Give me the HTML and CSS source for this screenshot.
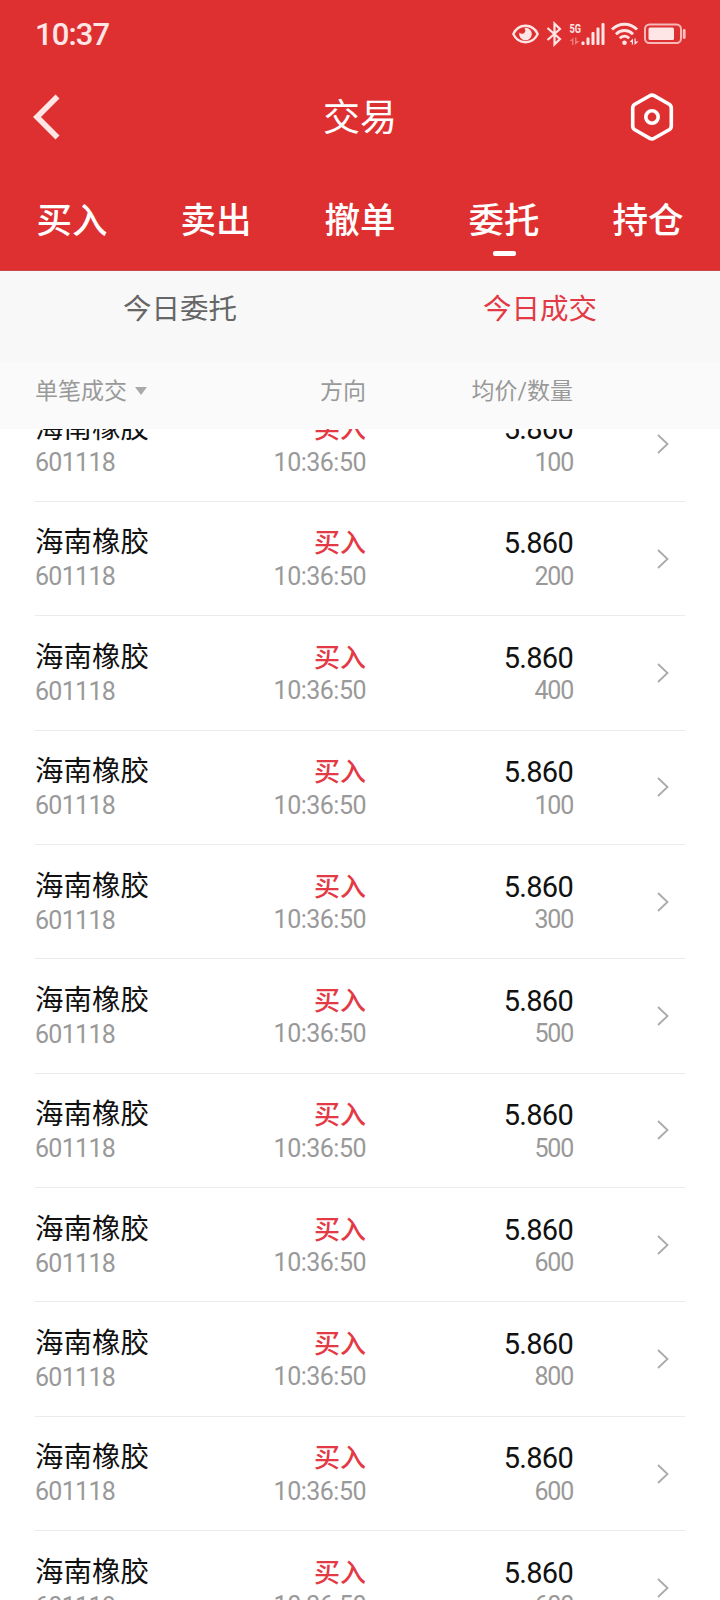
FILE: index.html
```
<!DOCTYPE html>
<html lang="zh-CN">
<head>
    <meta charset="UTF-8">
    <meta name="viewport" content="width=device-width, initial-scale=1.0">
    <title>交易</title>
    <link rel="stylesheet" href="styles.css">
</head>

<body>
    <div class="app">
        <header class="header">
            <div class="status-bar">
                <span class="clock">10:37</span>
                <div class="status-icons">
                    <svg class="icon-eye" width="27" height="20" viewBox="0 0 27 20" fill="none">
                        <path d="M1.3 10C6.5-1 20.5-1 25.7 10C20.5 21 6.5 21 1.3 10Z" stroke="currentColor" stroke-width="2.3"/>
                        <path d="M13.500 3.700A6.300 6.300 0 1 1 7.400 8.400Q9 10.500 11.500 9.500Q14.500 8 12.500 3.800Z" fill="currentColor"/>
                    </svg>
                    <svg class="icon-bluetooth" width="16" height="24" viewBox="0 0 16 24" fill="none" stroke="currentColor" stroke-width="2.200">
                        <path d="M1.500 6L14 17L8.500 22.400V1.600L14 7L1.500 18"/>
                    </svg>
                    <svg class="icon-signal" width="36" height="24" viewBox="0 0 36 24">
                        <text class="signal-text" x="0.500" y="10.500" textLength="11.500" lengthAdjust="spacingAndGlyphs">5G</text>
                        <path d="M0.500 19L4.500 15.500V23H3V19ZM6 15.500H7.500V19H10.500L6 23Z" fill="currentColor" opacity="0.4"/>
                        <g fill="currentColor">
                            <rect x="12.500" y="19.500" width="3" height="3.500" rx="1"/>
                            <rect x="17.500" y="15.500" width="3" height="7.500" rx="1"/>
                            <rect x="22.500" y="10" width="3" height="13" rx="1"/>
                            <rect x="27.500" y="5.500" width="3" height="17.500" rx="1"/>
                            <rect x="32.500" y="1" width="3" height="22" rx="1"/>
                        </g>
                    </svg>
                    <svg class="icon-wifi" width="28" height="24" viewBox="0 0 28 24" fill="none" stroke="currentColor" stroke-width="2.900">
                        <path d="M1 7.500C8 0.500 19 0.500 26 7.500"/>
                        <path d="M5 12.200C10 7.300 17 7.300 22 12.200"/>
                        <path d="M8.800 16.200C11.500 13.400 15.500 13.400 18.200 16.200"/>
                        <circle cx="13.500" cy="20.800" r="2.300" fill="currentColor" stroke="none"/>
                        <path d="M18.500 20L22 16.500V22.500H20.800V20ZM23.500 16.500H24.700V19.500H27.500L23.500 23Z" fill="currentColor" stroke="none"/>
                    </svg>
                    <svg class="icon-battery" width="42" height="22" viewBox="0 0 42 22" fill="none">
                        <rect x="1" y="1.500" width="36" height="18.500" rx="4.500" stroke="currentColor" stroke-width="2" opacity="0.75"/>
                        <rect x="4.500" y="4.500" width="25.500" height="12.500" rx="1.500" fill="currentColor"/>
                        <rect x="38.800" y="6" width="2.800" height="10" rx="1.400" fill="currentColor" opacity="0.8"/>
                    </svg>
                </div>
            </div>

            <div class="title-bar">
                <button class="back-btn" aria-label="返回">
                    <svg width="28" height="46" viewBox="0 0 28 46" fill="none" stroke="currentColor" stroke-width="5.600">
                        <path d="M24.500 2.500L4 23L24.500 43.500"/>
                    </svg>
                </button>
                <h1>交易</h1>
                <button class="settings-btn" aria-label="设置">
                    <svg width="44" height="48" viewBox="0 0 44 48" fill="none" stroke="currentColor" stroke-width="3.600" stroke-linejoin="round">
                        <path d="M19.800 2.700Q22 1.500 24.200 2.700L39.200 11.200Q41.300 12.500 41.300 15V33Q41.300 35.500 39.200 36.800L24.200 45.300Q22 46.500 19.800 45.300L4.800 36.800Q2.700 35.500 2.700 33V15Q2.700 12.500 4.800 11.200Z"/>
                        <circle cx="22" cy="24" r="6.200"/>
                    </svg>
                </button>
            </div>

            <nav class="main-tabs">
                <a class="tab">买入</a>
                <a class="tab">卖出</a>
                <a class="tab">撤单</a>
                <a class="tab active">委托</a>
                <a class="tab">持仓</a>
            </nav>
        </header>

        <div class="sub-tabs">
            <a class="sub-tab">今日委托</a>
            <a class="sub-tab active">今日成交</a>
        </div>

        <div class="table-head">
            <span class="filter">单笔成交<i class="caret"></i></span>
            <span class="right">方向</span>
            <span class="right">均价/数量</span>
        </div>

        <main class="list">
            <div class="rows">
                <div class="row">
                    <div class="stock"><p class="name">海南橡胶</p><p class="code">601118</p></div>
                    <div class="side"><p class="buy">买入</p><p class="time">10:36:50</p></div>
                    <div class="deal"><p class="price">5.860</p><p class="qty">100</p></div>
                    <svg class="arrow" viewBox="0 0 12 20"><path d="M1 1L10.500 10L1 19"/></svg>
                </div>
                <div class="row">
                    <div class="stock"><p class="name">海南橡胶</p><p class="code">601118</p></div>
                    <div class="side"><p class="buy">买入</p><p class="time">10:36:50</p></div>
                    <div class="deal"><p class="price">5.860</p><p class="qty">200</p></div>
                    <svg class="arrow" viewBox="0 0 12 20"><path d="M1 1L10.500 10L1 19"/></svg>
                </div>
                <div class="row">
                    <div class="stock"><p class="name">海南橡胶</p><p class="code">601118</p></div>
                    <div class="side"><p class="buy">买入</p><p class="time">10:36:50</p></div>
                    <div class="deal"><p class="price">5.860</p><p class="qty">400</p></div>
                    <svg class="arrow" viewBox="0 0 12 20"><path d="M1 1L10.500 10L1 19"/></svg>
                </div>
                <div class="row">
                    <div class="stock"><p class="name">海南橡胶</p><p class="code">601118</p></div>
                    <div class="side"><p class="buy">买入</p><p class="time">10:36:50</p></div>
                    <div class="deal"><p class="price">5.860</p><p class="qty">100</p></div>
                    <svg class="arrow" viewBox="0 0 12 20"><path d="M1 1L10.500 10L1 19"/></svg>
                </div>
                <div class="row">
                    <div class="stock"><p class="name">海南橡胶</p><p class="code">601118</p></div>
                    <div class="side"><p class="buy">买入</p><p class="time">10:36:50</p></div>
                    <div class="deal"><p class="price">5.860</p><p class="qty">300</p></div>
                    <svg class="arrow" viewBox="0 0 12 20"><path d="M1 1L10.500 10L1 19"/></svg>
                </div>
                <div class="row">
                    <div class="stock"><p class="name">海南橡胶</p><p class="code">601118</p></div>
                    <div class="side"><p class="buy">买入</p><p class="time">10:36:50</p></div>
                    <div class="deal"><p class="price">5.860</p><p class="qty">500</p></div>
                    <svg class="arrow" viewBox="0 0 12 20"><path d="M1 1L10.500 10L1 19"/></svg>
                </div>
                <div class="row">
                    <div class="stock"><p class="name">海南橡胶</p><p class="code">601118</p></div>
                    <div class="side"><p class="buy">买入</p><p class="time">10:36:50</p></div>
                    <div class="deal"><p class="price">5.860</p><p class="qty">500</p></div>
                    <svg class="arrow" viewBox="0 0 12 20"><path d="M1 1L10.500 10L1 19"/></svg>
                </div>
                <div class="row">
                    <div class="stock"><p class="name">海南橡胶</p><p class="code">601118</p></div>
                    <div class="side"><p class="buy">买入</p><p class="time">10:36:50</p></div>
                    <div class="deal"><p class="price">5.860</p><p class="qty">600</p></div>
                    <svg class="arrow" viewBox="0 0 12 20"><path d="M1 1L10.500 10L1 19"/></svg>
                </div>
                <div class="row">
                    <div class="stock"><p class="name">海南橡胶</p><p class="code">601118</p></div>
                    <div class="side"><p class="buy">买入</p><p class="time">10:36:50</p></div>
                    <div class="deal"><p class="price">5.860</p><p class="qty">800</p></div>
                    <svg class="arrow" viewBox="0 0 12 20"><path d="M1 1L10.500 10L1 19"/></svg>
                </div>
                <div class="row">
                    <div class="stock"><p class="name">海南橡胶</p><p class="code">601118</p></div>
                    <div class="side"><p class="buy">买入</p><p class="time">10:36:50</p></div>
                    <div class="deal"><p class="price">5.860</p><p class="qty">600</p></div>
                    <svg class="arrow" viewBox="0 0 12 20"><path d="M1 1L10.500 10L1 19"/></svg>
                </div>
                <div class="row">
                    <div class="stock"><p class="name">海南橡胶</p><p class="code">601118</p></div>
                    <div class="side"><p class="buy">买入</p><p class="time">10:36:50</p></div>
                    <div class="deal"><p class="price">5.860</p><p class="qty">600</p></div>
                    <svg class="arrow" viewBox="0 0 12 20"><path d="M1 1L10.500 10L1 19"/></svg>
                </div>
            </div>
        </main>
    </div>
</body>
</html>
```

FILE: styles.css
```
* {
    margin: 0;
    padding: 0;
    box-sizing: border-box;
}
body {
    font-family: Roboto, 'Noto Sans CJK SC', sans-serif;
    background: #fff;
    overflow: hidden;
}
.app {
    display: flex;
    flex-direction: column;
    width: 720px;
    height: 1600px;
    overflow: hidden;
}
.header {
    flex: none;
    height: 271px;
    background: #df3031;
    border-bottom: 1px solid #c9494a;
    color: #fff;
}

/* Barra de estado */
.status-bar {
    display: flex;
    justify-content: space-between;
    align-items: center;
    height: 68px;
    padding: 0 34px 0 35px;
    color: #ffe6e6;
}
.clock {
    font-size: 31px;
    font-weight: 500;
    letter-spacing: -0.9px;
}
.status-icons {
    display: flex;
    align-items: center;
}
.status-icons svg {
    display: block;
    overflow: visible;
}
.icon-bluetooth {
    margin-left: 7px;
}
.icon-signal {
    margin-left: 7px;
}
.signal-text {
    font-size: 13px;
    font-weight: 700;
    fill: currentColor;
}
.icon-wifi {
    margin-left: 6px;
}
.icon-battery {
    margin-left: 5px;
}

.title-bar {
    display: flex;
    justify-content: space-between;
    align-items: center;
    height: 98px;
    padding: 0 46px 0 33px;
}
.title-bar button {
    display: flex;
    width: 44px;
    border: none;
    background: none;
    color: #fff;
}
.title-bar .back-btn {
    width: 57px;
    color: #ffe6e6;
}
.title-bar h1 {
    padding-top: 4px;
    font-size: 37px;
    font-weight: 400;
    line-height: 52px;
}

.main-tabs {
    display: flex;
    height: 104px;
}
.tab {
    display: flex;
    flex: 1;
    flex-direction: column;
    align-items: center;
    padding-top: 29px;
    font-size: 35.5px;
    font-weight: 500;
    line-height: 52px;
}
.tab.active::after {
    content: '';
    width: 23px;
    height: 5px;
    margin-top: 4px;
    border-radius: 2px;
    background: #fff;
}

.sub-tabs {
    display: flex;
    flex: none;
    height: 91px;
    background: #f8f8f8;
}
.sub-tab {
    flex: 1;
    padding-top: 19px;
    font-size: 28.5px;
    line-height: 40px;
    text-align: center;
    color: #666;
}
.sub-tab.active {
    color: #e33a45;
}

.table-head,
.row {
    display: grid;
    grid-template-columns: 165px 166px 207px 1fr;
}
.table-head {
    flex: none;
    align-items: center;
    height: 67px;
    padding: 0 35px 14px;
    background: #fafafa;
    font-size: 23px;
    color: #999;
}
.filter {
    display: flex;
    align-items: center;
}
.caret {
    margin: 5px 0 0 8px;
    border: 6px solid transparent;
    border-top: 8px solid #aaa;
    border-bottom: none;
}
.right {
    text-align: right;
}

.list {
    flex: 1;
    min-height: 0;
    overflow: hidden;
}
/* lista desplazada: la primera fila queda cortada */
.rows {
    margin-top: -41.4px;
    padding: 0 35px;
}
.row {
    height: 114.36px;
    border-bottom: 1px solid #ebebeb;
    white-space: nowrap;
}
.side,
.deal {
    text-align: right;
}
.row p {
    line-height: 34px;
}
.name {
    padding-top: 24.5px;
    font-size: 28.5px;
    color: #111;
}
.code {
    font-size: 25px;
    letter-spacing: -0.7px;
    color: #999;
}
.buy {
    padding-top: 24.5px;
    font-size: 26px;
    font-weight: 500;
    color: #e33a45;
}
.price {
    padding-top: 24.5px;
    font-size: 29px;
    letter-spacing: -0.7px;
    color: #111;
}
.time,
.qty {
    margin-top: -0.5px;
    font-size: 25px;
    letter-spacing: -0.5px;
    color: #999;
}
.qty {
    letter-spacing: -1.2px;
}
.arrow {
    align-self: center;
    justify-self: end;
    width: 12px;
    height: 20px;
    margin-right: 16px;
    fill: none;
    stroke: #aaa;
    stroke-width: 1.8;
}
```
